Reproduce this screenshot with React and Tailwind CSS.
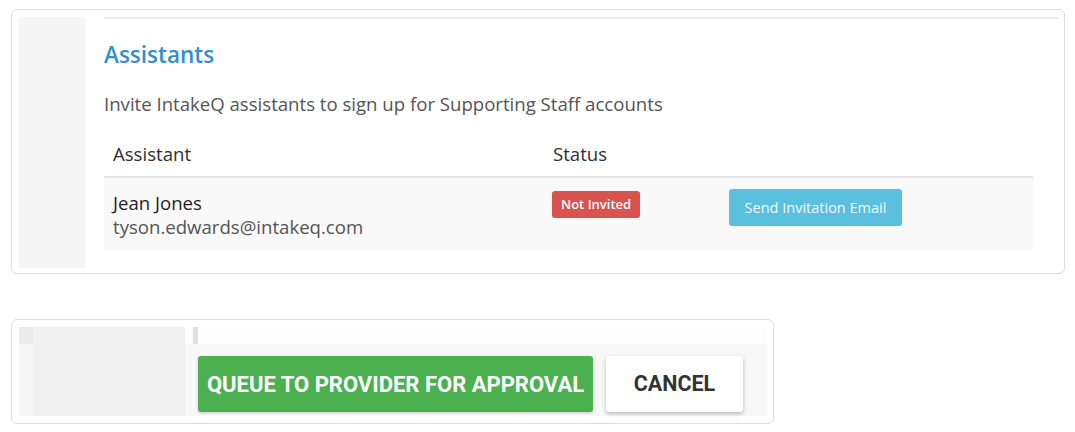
const ROBOTO = "font-['Roboto','Liberation_Sans',sans-serif]";

function AssistantsCard() {
  return (
    <div className="ml-[11px] mt-[8px] flex h-[265px] w-[1054px] rounded-[6px] border border-[#dcdcdc] pt-[7px] pl-[7px] pr-[6px] pb-[5px]">
      {/* left gutter */}
      <div className="w-[66px] bg-[#f5f5f5]" />

      <div className="flex-1 pl-[19px]">
        <div className="border-t-2 border-[#ececec]" />
        <h2 className="mt-[22px] text-[22.5px] font-semibold leading-[28px] text-[#3090d0]">Assistants</h2>
        <p className="mt-[24px] text-[18.6px] leading-[22px] text-[#555]">
          Invite IntakeQ assistants to sign up for Supporting Staff accounts
        </p>

        <div className="mt-[20px] w-[929px]">
          {/* header */}
          <div className="flex border-b-2 border-[#e4e4e4] pt-[8px] pb-[11px] text-[18.6px] leading-[22px] text-[#2f2f2f]">
            <div className="w-[440px] px-[9px]">Assistant</div>
            <div className="w-[176px] px-[9px]">Status</div>
            <div className="flex-1" />
          </div>

          {/* row */}
          <div className="flex h-[73px] bg-[#f9f9f9]">
            <div className="w-[440px] px-[9px] pt-[13px] text-[18.6px] leading-[24px]">
              <div className="text-[#1f1f1f]">Jean Jones</div>
              <div className="text-[#555]">tyson.edwards@intakeq.com</div>
            </div>
            <div className="w-[176px] px-[8px] pt-[13px]">
              <span className="inline-block h-[27px] rounded-[3px] bg-[#d9534f] px-[9px] text-[13px] font-semibold leading-[27px] text-white">
                Not Invited
              </span>
            </div>
            <div className="flex-1 px-[9px] pt-[11px]">
              <button
                type="button"
                className="h-[37px] w-[173px] rounded-[3px] bg-[#5bc0de] text-[14.5px] text-[#eef8fc]"
              >
                Send Invitation Email
              </button>
            </div>
          </div>
        </div>
      </div>
    </div>
  );
}

function ActionsCard() {
  return (
    <div className="ml-[11px] mt-[45px] flex h-[105px] w-[763px] rounded-[6px] border border-[#dcdcdc] pt-[7px] pl-[7px] pr-[6px] pb-[7px]">
      <div className="flex w-[14px] flex-col">
        <div className="h-[17px] bg-[#ebebeb]" />
        <div className="flex-1 bg-[#f6f6f6]" />
      </div>
      <div className="w-[152px] bg-[#f0f0f0]" />

      <div className="flex flex-1 flex-col">
        <div className="flex h-[17px] bg-[#fdfdfd]">
          <div className="ml-[8px] w-[5px] bg-[#e2e2e2]" />
        </div>
        <div className={`flex flex-1 gap-[13px] bg-[#f8f8f8] pl-[13px] pt-[12px] ${ROBOTO}`}>
          <button
            type="button"
            className="h-[56px] w-[395px] rounded-[3px] bg-[#4caf50] text-[22px] font-bold text-white shadow-[0_1px_3px_rgba(0,0,0,0.2)]"
          >
            QUEUE TO PROVIDER FOR APPROVAL
          </button>
          <button
            type="button"
            className="h-[56px] w-[137px] rounded-[3px] bg-white text-[21.5px] font-bold text-[#333] shadow-[0_2px_4px_rgba(0,0,0,0.25)]"
          >
            CANCEL
          </button>
        </div>
      </div>
    </div>
  );
}

export default function App() {
  return (
    <div className="h-[432px] w-[1075px] overflow-hidden bg-white pt-px font-['Open_Sans',sans-serif]">
      <AssistantsCard />
      <ActionsCard />
    </div>
  );
}
